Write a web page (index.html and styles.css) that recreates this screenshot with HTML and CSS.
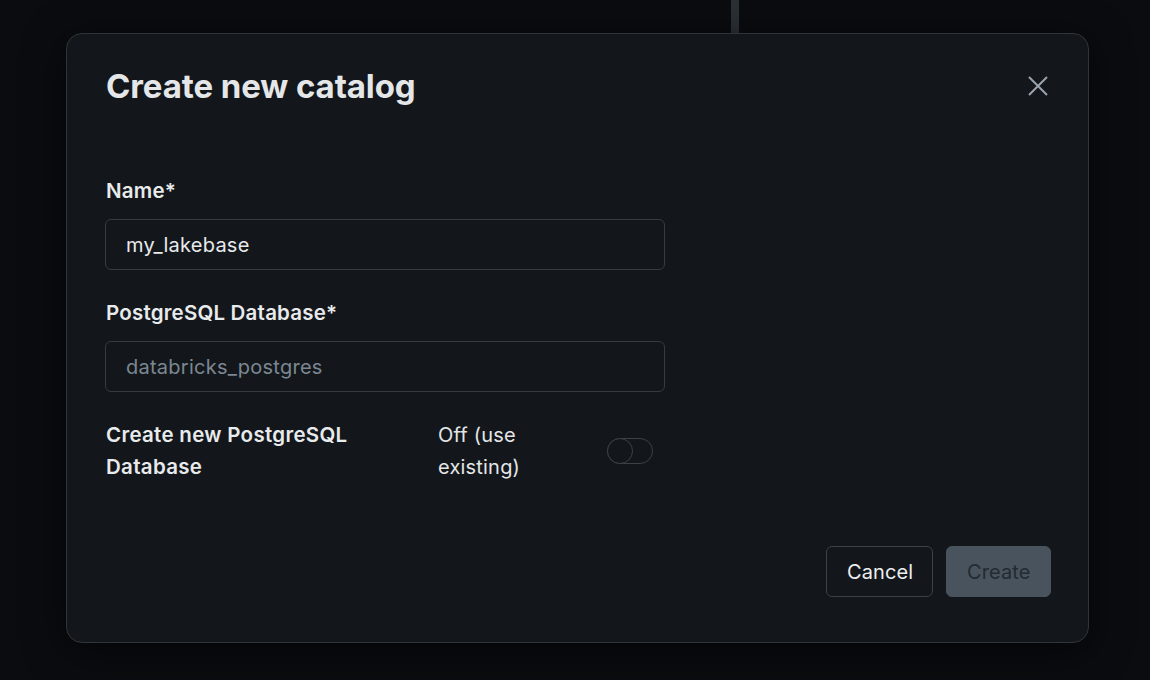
FILE: index.html
```html
<!DOCTYPE html>
<html lang="en">
<head>
<meta charset="utf-8">
<title>Create new catalog</title>
<link rel="stylesheet" href="styles.css">
</head>
<body>
<div class="backdrop">
  <div class="divider"></div>
  <div class="modal" role="dialog" aria-labelledby="title">
    <div class="modal-header">
      <h1 id="title" class="modal-title">Create new catalog</h1>
      <button class="close-btn" aria-label="Close">
        <svg width="20" height="20" viewBox="0 0 20 20" fill="none" stroke="currentColor" stroke-width="2" stroke-linecap="butt">
          <path d="M1 1 L19 19 M19 1 L1 19"/>
        </svg>
      </button>
    </div>
    <div class="modal-body">
      <div class="field">
        <label class="field-label">Name*</label>
        <div class="input">my_lakebase</div>
      </div>
      <div class="field">
        <label class="field-label">PostgreSQL Database*</label>
        <div class="input placeholder">databricks_postgres</div>
      </div>
      <div class="toggle-row">
        <div class="toggle-label">Create new PostgreSQL Database</div>
        <div class="toggle-state">Off (use existing)</div>
        <div class="switch"><span class="knob"></span></div>
      </div>
    </div>
    <div class="modal-footer">
      <button class="btn btn-secondary">Cancel</button>
      <button class="btn btn-primary" disabled>Create</button>
    </div>
  </div>
</div>
</body>
</html>
```

FILE: styles.css
```css
* { box-sizing: border-box; }
html, body {
  margin: 0;
  padding: 0;
  width: 1150px;
  height: 680px;
  overflow: hidden;
  background: #0a0c0f;
  font-family: Inter, "Noto Sans", "Liberation Sans", sans-serif;
  color: #e6e8ea;
}
.backdrop {
  position: relative;
  width: 1150px;
  height: 680px;
  padding: 33px 61px 0 66px;
}
.divider {
  position: absolute;
  left: 731px;
  top: 0;
  width: 8px;
  height: 40px;
  background: #2b3035;
}
.modal {
  position: relative;
  width: 1023px;
  height: 610px;
  background: #13171b;
  border: 1px solid #2f353b;
  border-radius: 16px;
  box-shadow: 0 8px 40px rgba(0,0,0,0.6);
  padding: 32px 37px 45px 39px;
  display: flex;
  flex-direction: column;
}
.modal-header {
  display: flex;
  align-items: center;
  justify-content: space-between;
  height: 40px;
}
.modal-title {
  margin: 0;
  font-size: 33px;
  line-height: 40px;
  font-weight: 700;
  letter-spacing: -0.1px;
  color: #e4e6e8;
}
.close-btn {
  background: none;
  border: none;
  padding: 0;
  margin-right: 3px;
  color: #9aa4ae;
  width: 20px;
  height: 20px;
  display: flex;
}
.modal-body {
  margin-top: 69px;
  width: 560px;
  display: flex;
  flex-direction: column;
  gap: 27px;
}
.field {
  display: flex;
  flex-direction: column;
  gap: 12px;
}
.field-label {
  font-size: 20.5px;
  line-height: 32px;
  font-weight: 600;
  letter-spacing: 0.2px;
  color: #e8eaec;
}
.input {
  width: 560px;
  margin-left: -1px;
  height: 51px;
  border: 1px solid #343b42;
  border-radius: 6px;
  padding: 0 20px;
  display: flex;
  align-items: center;
  font-size: 20px;
  letter-spacing: 0.25px;
  color: #e8eaec;
  background: #13171b;
}
.input.placeholder { color: #7c8792; }
.toggle-row {
  display: grid;
  grid-template-columns: 316px 153px auto;
  column-gap: 16px;
  align-items: center;
}
.toggle-label {
  font-size: 20.5px;
  line-height: 32px;
  font-weight: 600;
  letter-spacing: 0.3px;
  color: #e8eaec;
}
.toggle-state {
  font-size: 20px;
  line-height: 32px;
  letter-spacing: 0.2px;
  color: #e4e6e8;
}
.switch {
  position: relative;
  width: 46px;
  height: 26px;
  border: 1px solid #3a4149;
  border-radius: 13px;
}
.knob {
  position: absolute;
  left: -1px;
  top: -1px;
  width: 26px;
  height: 26px;
  border: 1px solid #3a4149;
  border-radius: 50%;
  background: #13171b;
}
.modal-footer {
  margin-top: auto;
  display: flex;
  justify-content: flex-end;
  gap: 13px;
}
.btn {
  height: 51px;
  border-radius: 6px;
  font-family: inherit;
  font-size: 20px;
  letter-spacing: 0.1px;
  padding: 0 20px;
}
.btn-secondary {
  width: 107px;
  background: #13171b;
  border: 1px solid #3a4149;
  color: #eceef0;
}
.btn-primary {
  width: 105px;
  background: #48535e;
  border: 1px solid #48535e;
  color: #232a31;
}
```
